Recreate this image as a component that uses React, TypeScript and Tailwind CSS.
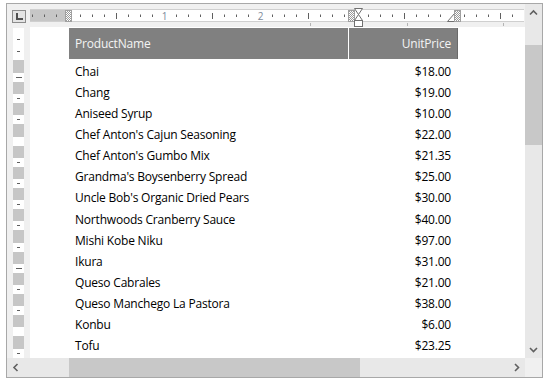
import React from "react";

const products: [string, string][] = [
  ["Chai", "$18.00"],
  ["Chang", "$19.00"],
  ["Aniseed Syrup", "$10.00"],
  ["Chef Anton's Cajun Seasoning", "$22.00"],
  ["Chef Anton's Gumbo Mix", "$21.35"],
  ["Grandma's Boysenberry Spread", "$25.00"],
  ["Uncle Bob's Organic Dried Pears", "$30.00"],
  ["Northwoods Cranberry Sauce", "$40.00"],
  ["Mishi Kobe Niku", "$97.00"],
  ["Ikura", "$31.00"],
  ["Queso Cabrales", "$21.00"],
  ["Queso Manchego La Pastora", "$38.00"],
  ["Konbu", "$6.00"],
  ["Tofu", "$23.25"],
];

const font = { fontFamily: '"Open Sans", "Noto Sans", sans-serif' };

function Hatch({ id }: { id: string }) {
  return (
    <pattern id={id} width="2" height="2" patternUnits="userSpaceOnUse">
      <rect width="2" height="2" fill="#ffffff" />
      <rect width="1" height="1" fill="#9a9a9a" />
      <rect x="1" y="1" width="1" height="1" fill="#9a9a9a" />
    </pattern>
  );
}

// horizontal ruler, origin is the top-left of the ruler cell
function TopRuler() {
  const ticks: React.ReactNode[] = [];
  for (let k = -3; k <= 37; k++) {
    const x = 38 + 12 * k + 0.5;
    if (k === 0 || k === 24 || k === 32) continue;
    if (k % 8 === 0) {
      ticks.push(
        <text key={k} x={x} y={16} fontSize="10" fill="#7d8a9a" textAnchor="middle" style={font}>
          {k / 8}
        </text>
      );
    } else if (k % 4 === 0) {
      ticks.push(<line key={k} x1={x} x2={x} y1={9} y2={15} stroke="#606060" />);
    } else {
      ticks.push(<line key={k} x1={x} x2={x} y1={10.5} y2={13} stroke="#606060" />);
    }
  }
  return (
    <svg width="495" height="23" className="block">
      <defs>
        <Hatch id="hatch-top" />
      </defs>
      <rect x="0" y="5" width="494" height="13" fill="#ffffff" />
      <line x1="0" x2="494" y1="5.5" y2="5.5" stroke="#cfcfcf" />
      <line x1="0" x2="494" y1="17.5" y2="17.5" stroke="#cfcfcf" />
      <rect x="0" y="6" width="36" height="11" fill="#c6c6c6" />
      {ticks}
      {[280, 377, 473].map((x) => (
        <line key={x} x1={x + 0.5} x2={x + 0.5} y1={19} y2={22} stroke="#b4b4b4" />
      ))}
      {/* left margin */}
      <rect x="35.5" y="6.5" width="6" height="11" fill="url(#hatch-top)" stroke="#a0a0a0" />
      {/* column separator */}
      <rect x="318.5" y="6.5" width="6" height="11" fill="url(#hatch-top)" stroke="#a0a0a0" />
      <path d="M324.5 4.5 H332.5 L328.5 10.5 L332.5 16.5 H324.5 L328.5 10.5 Z" fill="#ffffff" stroke="#707070" />
      <rect x="324.5" y="16.5" width="8" height="6" fill="#ffffff" stroke="#707070" />
      {/* right indent */}
      <path d="M417.5 17.5 L424.5 9.5 V17.5 Z" fill="#ffffff" stroke="#707070" />
      <rect x="424.5" y="6.5" width="6" height="11" fill="url(#hatch-top)" stroke="#a0a0a0" />
    </svg>
  );
}

// vertical ruler, origin is the top-left of the left cell
function SideRuler() {
  const boxes = Array.from({ length: 14 }, (_, i) => Math.round(73 + 21.2 * i) - 27);
  const longDash = [0, 9];
  return (
    <svg width="23" height="331" className="block">
      <rect x="6" y="1" width="11" height="330" fill="#c6c6c6" />
      <rect x="6" y="1" width="11" height="32" fill="#ffffff" />
      <line x1="10" x2="13" y1="12.5" y2="12.5" stroke="#606060" />
      <line x1="10" x2="13" y1="24.5" y2="24.5" stroke="#606060" />
      {boxes.map((y, i) => (
        <g key={i}>
          <rect x="6" y={y} width="11" height="9" fill="#ffffff" />
          {i !== 3 && i !== 12 && (
            longDash.includes(i) ? (
              <line x1="9" x2="15" y1={y + 4.5} y2={y + 4.5} stroke="#606060" />
            ) : (
              <line x1="10" x2="13" y1={y + 4.5} y2={y + 4.5} stroke="#606060" />
            )
          )}
        </g>
      ))}
    </svg>
  );
}

function Chevron({ dir }: { dir: "up" | "down" | "left" | "right" }) {
  const pts = {
    up: "1,5.5 4.5,2 8,5.5",
    down: "1,2 4.5,5.5 8,2",
    left: "5.5,1 2,4.5 5.5,8",
    right: "2,1 5.5,4.5 2,8",
  }[dir];
  const vertical = dir === "up" || dir === "down";
  return (
    <svg width={vertical ? 9 : 8} height={vertical ? 8 : 9}>
      <polyline points={pts} fill="none" stroke="#606060" strokeWidth="1.6" />
    </svg>
  );
}

export default function App() {
  return (
    <div className="w-[549px] h-[386px] bg-white pt-[3px] pl-[6px]" style={font}>
      <div className="w-[537px] h-[375px] border border-[#a8a8a8] bg-[#f0f0f0] grid grid-cols-[23px_495px_17px] grid-rows-[23px_331px_19px]">
        {/* tab selector */}
        <div className="pl-[5px] pt-[6px]">
          <div className="w-[14px] h-[13px] border border-[#8c8c8c] bg-[#e4e4e4] flex items-center justify-center">
            <svg width="8" height="8">
              <path d="M1 0 V7 H8 V5 H3 V0 Z" fill="#505050" />
            </svg>
          </div>
        </div>

        <div>
          <TopRuler />
        </div>

        {/* vertical scrollbar */}
        <div className="row-span-2 bg-[#e8e8e8] flex flex-col">
          <div className="h-[17px] flex items-center justify-center">
            <Chevron dir="up" />
          </div>
          <div className="h-[24px]" />
          <div className="h-[100px] bg-[#c8c8c8]" />
          <div className="flex-1" />
          <div className="h-[17px] flex items-center justify-center">
            <Chevron dir="down" />
          </div>
        </div>

        <div>
          <SideRuler />
        </div>

        {/* page */}
        <div className="bg-white pt-[1px] pl-[39px] overflow-hidden">
          <div className="w-[389px] text-[12px] tracking-[-0.2px] text-black">
            <div className="h-[31px] flex bg-[#808080] text-[#f4f4f4] border-r border-[#6a6a6a]">
              <div className="w-[280px] border-r border-white flex items-center pl-[6px]">ProductName</div>
              <div className="flex-1 flex items-center justify-end pr-[6px]">UnitPrice</div>
            </div>
            <div className="pt-[2px]">
              {products.map(([name, price]) => (
                <div key={name} className="h-[21.15px] flex items-center">
                  <div className="w-[280px] pl-[6px] whitespace-nowrap">{name}</div>
                  <div className="flex-1 text-right pr-[7px]">{price}</div>
                </div>
              ))}
            </div>
          </div>
        </div>

        {/* horizontal scrollbar */}
        <div className="col-span-2 bg-[#e8e8e8] flex">
          <div className="w-[17px] flex items-center justify-center">
            <Chevron dir="left" />
          </div>
          <div className="w-[45px]" />
          <div className="w-[291px] bg-[#c8c8c8]" />
          <div className="flex-1" />
          <div className="w-[17px] flex items-center justify-center">
            <Chevron dir="right" />
          </div>
        </div>
        <div className="bg-[#f0f0f0]" />
      </div>
    </div>
  );
}
